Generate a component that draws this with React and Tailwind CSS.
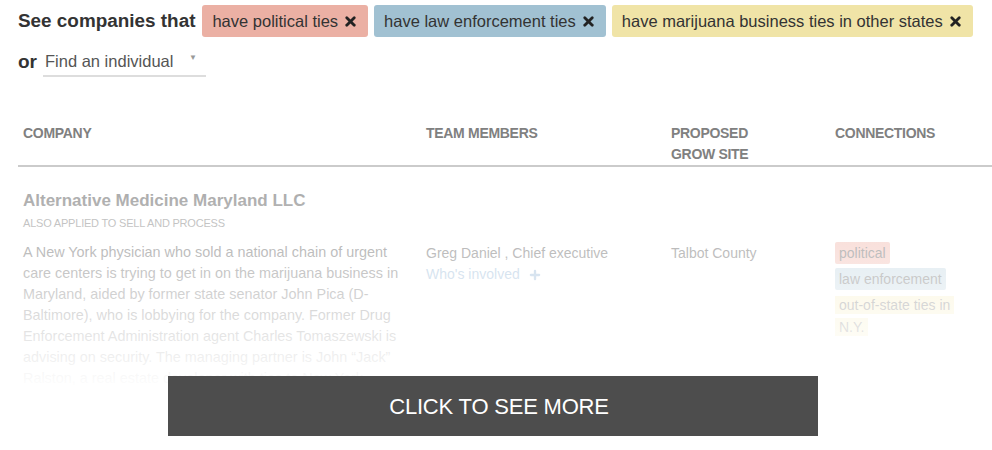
import { X, Plus } from 'lucide-react';

const sans = { fontFamily: '"Liberation Sans", Arial, sans-serif' };

function Pill({ color, children }) {
  return (
    <span className={`flex items-center h-8 pl-[10px] pr-[10px] rounded-[3px] text-[16.5px] text-[#333] ${color}`}>
      {children}
      <X size={15} strokeWidth={4.5} className="ml-[5px] text-[#222]" />
    </span>
  );
}

const description = [
  'A New York physician who sold a national chain of urgent',
  'care centers is trying to get in on the marijuana business in',
  'Maryland, aided by former state senator John Pica (D-',
  'Baltimore), who is lobbying for the company. Former Drug',
  'Enforcement Administration agent Charles Tomaszewski is',
  'advising on security. The managing partner is John \u201cJack\u201d',
  'Ralston, a real estate developer with ties to New York.',
];

export default function App() {
  return (
    <div className="relative w-[992px] h-[450px] overflow-hidden bg-white" style={sans}>
      {/* Filters */}
      <div className="pl-[18px] pt-[5px]">
        <div className="flex items-center gap-[6px]">
          <span className="text-[18.9px] font-bold text-[#333] mr-[1px]">See companies that</span>
          <Pill color="bg-[#ebb0a4]">have political ties</Pill>
          <Pill color="bg-[#a1c1d2]">have law enforcement ties</Pill>
          <Pill color="bg-[#f0e4a7]">have marijuana business ties in other states</Pill>
        </div>
        <div className="flex items-center mt-[11px]">
          <span className="text-[19px] font-bold text-[#333]">or</span>
          <div className="ml-[6px] w-[163px] h-[29px] border-b-2 border-[#ddd] flex items-start pl-[2px] pt-[1px] relative">
            <span className="text-[16.5px] text-[#555]">Find an individual</span>
            <span className="absolute left-[146px] top-[4px] text-[8px] text-[#999]">▼</span>
          </div>
        </div>
      </div>

      {/* Table header */}
      <div className="ml-[18px] mt-[46px] grid grid-cols-[403px_245px_164px_1fr] border-b-2 border-[#cbcbcb]">
        {['COMPANY', 'TEAM MEMBERS', 'PROPOSED\nGROW SITE', 'CONNECTIONS'].map((h) => (
          <div key={h} className="px-[5px] text-[14px] font-bold text-[#808080] leading-[21px] whitespace-pre-line tracking-[-0.3px]">
            {h}
          </div>
        ))}
      </div>

      {/* Row */}
      <div className="relative ml-[18px] mt-[23px] grid grid-cols-[403px_245px_164px_1fr]">
        <div className="px-[5px]">
          <div className="text-[17px] font-bold text-[#888] leading-[22px]">Alternative Medicine Maryland LLC</div>
          <div className="text-[11px] text-[#999] leading-[20px] mt-[1px] tracking-[-0.2px]">ALSO APPLIED TO SELL AND PROCESS</div>
          <div className="mt-[9px] text-[14.4px] leading-[21px] text-[#777]">
            {description.map((l) => (
              <div key={l} className="whitespace-nowrap">{l}</div>
            ))}
          </div>
        </div>
        <div className="px-[5px] pt-[53px] text-[14px] leading-[21px]">
          <div className="text-[#777]">Greg Daniel , Chief executive</div>
          <div className="flex items-center text-[#9dbcd9]">
            Who's involved
            <Plus size={14} strokeWidth={4} className="ml-[8px]" />
          </div>
        </div>
        <div className="px-[5px] pt-[53px] text-[14px] leading-[21px] text-[#777]">Talbot County</div>
        <div className="px-[5px] pt-[52px] text-[14px] leading-[22px] text-[#777]">
          <div className="flex flex-col items-start gap-[4px]">
            <span className="px-[4px] rounded-[2px] bg-[#f3c4bb]">political</span>
            <span className="px-[4px] rounded-[2px] bg-[#c9dbe5]">law enforcement</span>
            <span className="w-[122px] rounded-[2px]">
              <span className="bg-[#f8f0c8] px-[4px] py-[1px] [box-decoration-break:clone]">out-of-state ties in N.Y.</span>
            </span>
          </div>
        </div>
        <div className="absolute inset-x-0 top-0 h-[200px] bg-linear-to-b from-white/30 to-white pointer-events-none" />
      </div>

      {/* Overlay button */}
      <button className="absolute left-[168px] top-[376px] w-[650px] h-[60px] pl-[12px] bg-[#4d4d4d] text-white text-[22px] tracking-[-0.2px] flex items-center justify-center">
        CLICK TO SEE MORE
      </button>
    </div>
  );
}
